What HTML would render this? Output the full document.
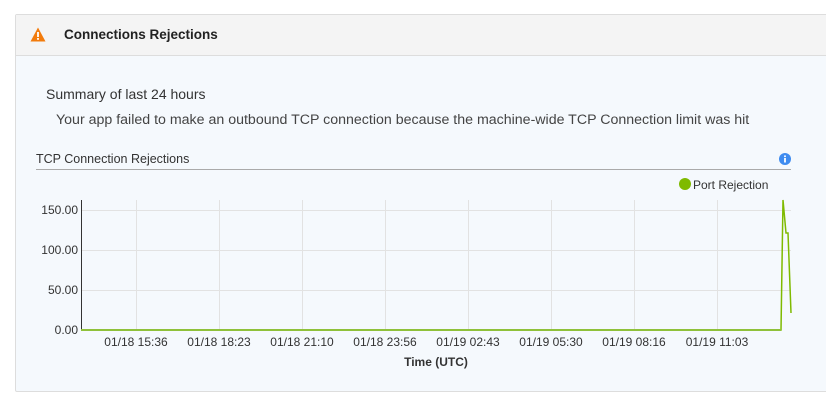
<!DOCTYPE html>
<html><head><style>
body{margin:0;width:826px;height:403px;background:#fff;font-family:"Liberation Sans",sans-serif;position:relative;overflow:hidden}
.panel{position:absolute;left:15px;top:14px;width:830px;height:376px;border:1px solid #ddd;background:#f5f9fd;border-radius:2px}
.hdr{height:40px;background:#f4f4f4;border-bottom:1px solid #ddd;position:relative}
.hdr span{position:absolute;left:48px;top:12px;font-size:13.5px;font-weight:bold;color:#222}
.t{position:absolute;color:#333}
</style></head><body>
<div class="panel"><div class="hdr">
<svg style="position:absolute;left:14px;top:12px" width="16" height="15" viewBox="0 0 16 15"><path d="M8 0.5L15.5 14.5H0.5Z" fill="#f27b0c"/><rect x="7.1" y="5" width="1.8" height="5" fill="#fff"/><rect x="7.1" y="11" width="1.8" height="1.8" fill="#fff"/></svg>
<span>Connections Rejections</span></div></div>
<div class="t" style="left:46px;top:86px;font-size:14px;color:#333">Summary of last 24 hours</div>
<div class="t" style="left:56px;top:112px;font-size:14.2px;color:#444;white-space:nowrap">Your app failed to make an outbound TCP connection because the machine-wide TCP Connection limit was hit</div>
<div class="t" style="left:36px;top:152px;font-size:12.5px;color:#333">TCP Connection Rejections</div>
<div style="position:absolute;left:36px;top:169px;width:755px;height:1px;background:#aaa"></div>
<svg style="position:absolute;left:779px;top:153px" width="12" height="12"><circle cx="6" cy="6" r="6" fill="#3f8cf0"/><rect x="5.1" y="5" width="1.8" height="4.5" fill="#fff"/><circle cx="6" cy="3.3" r="1" fill="#fff"/></svg>
<svg style="position:absolute;left:679px;top:178px" width="12" height="12"><circle cx="6" cy="6" r="6" fill="#7fba00"/></svg>
<div class="t" style="left:693px;top:178px;font-size:12px;color:#333">Port Rejection</div>
<svg style="position:absolute;left:0;top:0" width="826" height="403" font-family="Liberation Sans" font-size="12" fill="#333">
<g stroke="#e2e2e2" stroke-width="1">
<line x1="81" y1="210.5" x2="791" y2="210.5"/><line x1="81" y1="250.5" x2="791" y2="250.5"/><line x1="81" y1="290.5" x2="791" y2="290.5"/>
<line x1="136.5" y1="200" x2="136.5" y2="330"/><line x1="219.5" y1="200" x2="219.5" y2="330"/><line x1="302.5" y1="200" x2="302.5" y2="330"/><line x1="385.5" y1="200" x2="385.5" y2="330"/><line x1="468.5" y1="200" x2="468.5" y2="330"/><line x1="551.5" y1="200" x2="551.5" y2="330"/><line x1="634.5" y1="200" x2="634.5" y2="330"/><line x1="717.5" y1="200" x2="717.5" y2="330"/>
</g>
<line x1="81.5" y1="200" x2="81.5" y2="330" stroke="#333"/>
<polyline points="81,330 781,330 783,200 786,233 788,233 791,313" fill="none" stroke="#7fba00" stroke-width="1.5"/>
<line x1="81" y1="330" x2="781" y2="330" stroke="#8fc13a" stroke-width="2"/>
<g text-anchor="end"><text x="78" y="214">150.00</text><text x="78" y="254">100.00</text><text x="78" y="294">50.00</text><text x="78" y="334">0.00</text></g>
<g text-anchor="middle"><text x="136" y="346">01/18 15:36</text><text x="219" y="346">01/18 18:23</text><text x="302" y="346">01/18 21:10</text><text x="385" y="346">01/18 23:56</text><text x="468" y="346">01/19 02:43</text><text x="551" y="346">01/19 05:30</text><text x="634" y="346">01/19 08:16</text><text x="717" y="346">01/19 11:03</text>
<text x="436" y="366" font-weight="bold">Time (UTC)</text></g>
</svg>
</body></html>
